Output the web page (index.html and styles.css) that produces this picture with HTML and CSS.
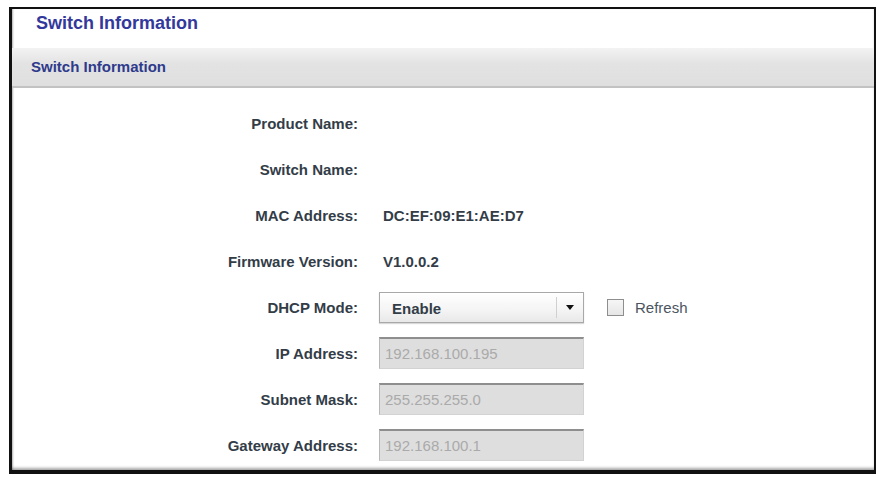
FILE: index.html
```html
<!DOCTYPE html>
<html>
<head>
<meta charset="utf-8">
<link rel="stylesheet" href="styles.css">
</head>
<body>
<div class="frame">
  <div class="title">Switch Information</div>
  <div class="bar">Switch Information</div>
  <div class="rows">
    <div class="row"><div class="label">Product Name:</div><div class="value"></div></div>
    <div class="row"><div class="label">Switch Name:</div><div class="value"></div></div>
    <div class="row"><div class="label">MAC Address:</div><div class="value">DC:EF:09:E1:AE:D7</div></div>
    <div class="row"><div class="label">Firmware Version:</div><div class="value">V1.0.0.2</div></div>
    <div class="row">
      <div class="label">DHCP Mode:</div>
      <div class="ctrl">
        <div class="select"><span class="sel-text">Enable</span><span class="sel-btn"><span class="tri"></span></span></div>
        <div class="check"><span class="box"></span><span class="check-text">Refresh</span></div>
      </div>
    </div>
    <div class="row"><div class="label">IP Address:</div><div class="input">192.168.100.195</div></div>
    <div class="row"><div class="label">Subnet Mask:</div><div class="input">255.255.255.0</div></div>
    <div class="row"><div class="label">Gateway Address:</div><div class="input">192.168.100.1</div></div>
  </div>
</div>
</body>
</html>
```
FILE: styles.css
```css
html, body {
  margin: 0;
  padding: 0;
  background: #ffffff;
}
body {
  font-family: "Liberation Sans", Arial, sans-serif;
}
.frame {
  margin: 7px 0 0 9px;
  width: 867px;
  box-sizing: border-box;
  border-top: 2px solid #111;
  border-left: 3px solid #111;
  border-right: 2px solid #111;
  border-bottom: 4px solid #111;
  padding-bottom: 2px;
  box-shadow: inset 0 -3px 3px -1px rgba(0,0,0,0.35), inset 2px 0 2px -1px rgba(0,0,0,0.25);
  background: #fff;
}
.title {
  height: 39px;
  line-height: 28px;
  padding-left: 24px;
  font-size: 18px;
  font-weight: bold;
  color: #33399b;
}
.bar {
  height: 38px;
  line-height: 38px;
  padding-left: 19px;
  font-size: 15px;
  font-weight: bold;
  color: #2e3a8c;
  background: linear-gradient(#f3f3f3, #e3e3e3 40%, #dfdfdf);
  border-bottom: 2px solid #c2c2c2;
}
.rows {
  padding-top: 12px;
}
.row {
  display: grid;
  grid-template-columns: 346px auto;
  column-gap: 21px;
  align-items: center;
  height: 46px;
}
.label {
  text-align: right;
  font-size: 15px;
  font-weight: bold;
  color: #333d48;
}
.value {
  padding-left: 4px;
  font-size: 15px;
  font-weight: bold;
  color: #333d48;
}
.ctrl {
  display: flex;
  align-items: center;
}
.select {
  display: flex;
  align-items: stretch;
  width: 205px;
  height: 31px;
  box-sizing: border-box;
  border: 1px solid #a8a8a8;
  background: linear-gradient(#ffffff, #f4f4f4 60%, #e8e8e8);
  box-shadow: 0 1px 1px rgba(0,0,0,0.15);
}
.sel-text {
  flex: 1;
  padding-left: 12px;
  line-height: 31px;
  font-size: 15px;
  font-weight: bold;
  color: #333d48;
}
.sel-btn {
  width: 26px;
  display: flex;
  align-items: center;
  justify-content: center;
  border-left: 1px solid #d0d0d0;
  margin: 4px 0;
}
.tri {
  width: 0;
  height: 0;
  border-left: 4px solid transparent;
  border-right: 4px solid transparent;
  border-top: 5px solid #111;
}
.check {
  display: flex;
  align-items: center;
  margin-left: 23px;
}
.box {
  width: 17px;
  height: 17px;
  box-sizing: border-box;
  border: 1px solid #8e8e8e;
  background: linear-gradient(#f6f6f6, #e6e6e6);
}
.check-text {
  margin-left: 11px;
  font-size: 15px;
  color: #4b5560;
}
.input {
  width: 205px;
  height: 32px;
  box-sizing: border-box;
  padding-left: 5px;
  line-height: 29px;
  font-size: 15px;
  color: #aaaaaa;
  background: #dedede;
  border: 1px solid #d2d2d2;
  border-top: 2px solid #8e8e8e;
  border-left: 1px solid #b8b8b8;
}
```
